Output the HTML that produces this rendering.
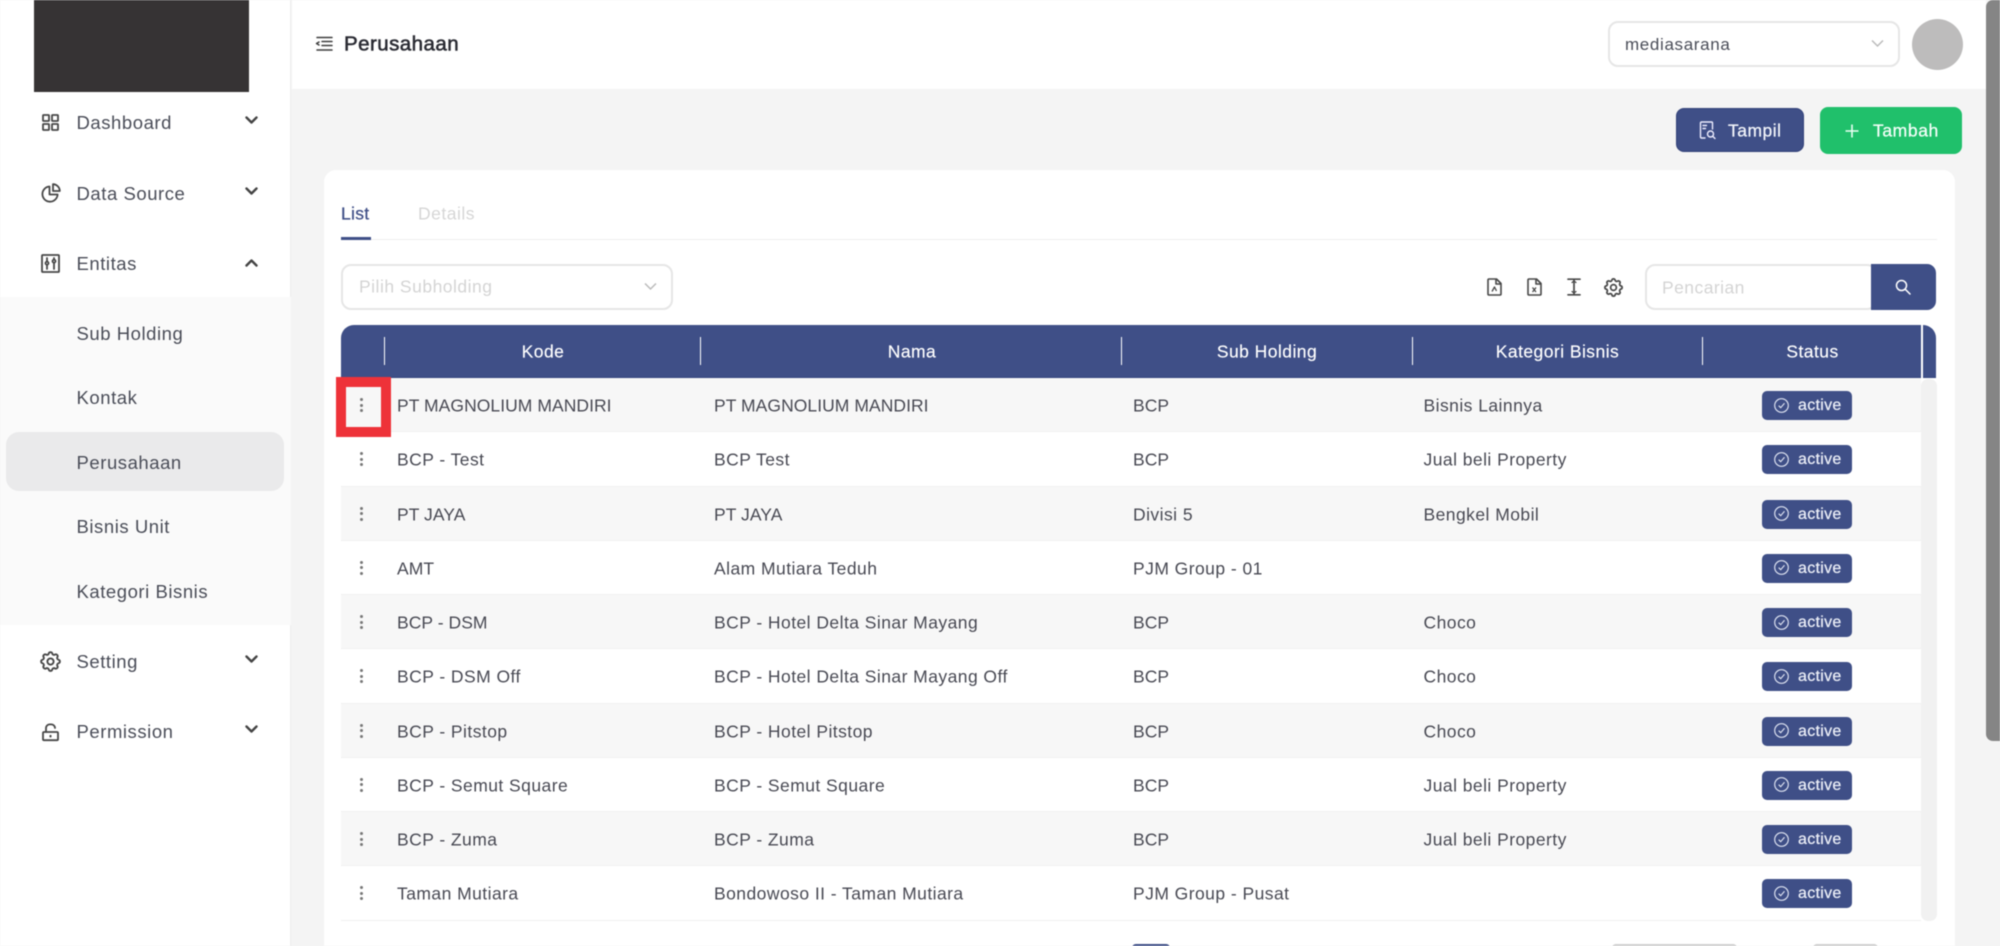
<!DOCTYPE html>
<html lang="id">
<head>
<meta charset="utf-8">
<title>Perusahaan</title>
<style>
*{box-sizing:border-box;margin:0;padding:0}
html,body{width:2000px;height:946px;overflow:hidden;background:#f4f4f4}
body{font-family:"Liberation Sans",sans-serif;color:#474852}
#w{position:absolute;left:0;top:0;width:2000px;height:946px;overflow:hidden;background:#f4f4f4;filter:blur(.45px)}
.a{position:absolute}
.t{position:absolute;white-space:nowrap;transform:translateY(-50%);line-height:1.2}
svg{position:absolute;overflow:visible}
#side{left:0;top:0;width:291px;height:946px;background:#fff;border-right:1px solid #eee}
.m{font-size:18.5px;letter-spacing:.55px;left:76.5px;color:#4a4d58}
.ic{fill:none;stroke:#474747;stroke-width:1.8;stroke-linecap:round;stroke-linejoin:round}
.ch{fill:none;stroke:#444;stroke-width:2.4;stroke-linecap:round;stroke-linejoin:round}
.box{background:#fff;border:2px solid #e6e6e6;border-radius:10px}
.row{position:absolute;left:341px;width:1580px;height:54.25px;border-bottom:1.5px solid #f0f0f0;background:#fff}
.row.o{background:#f7f7f7}
.row span{position:absolute;top:28px;transform:translateY(-50%);white-space:nowrap;font-size:17.5px;letter-spacing:.45px;line-height:1.2;color:#484953}
.row span.u{letter-spacing:.05px}
.row span.c1{left:56px}.row span.c2{left:373px}.row span.c3{left:792px}.row span.c4{left:1082.5px}
.row i{position:absolute;left:19.2px;width:3px;height:3px;border-radius:50%;background:#777}
.row i.d1{top:20px}.row i.d2{top:25.5px}.row i.d3{top:31px}
.row b{position:absolute;left:1421px;top:13px;width:90px;height:29px;background:#3f4f87;border-radius:5px;color:#eef1f9;font-weight:normal;font-size:16px;letter-spacing:.3px;line-height:30px;padding-left:36px;-webkit-text-stroke:.2px #eef1f9}
.row b svg{left:11.5px;top:6.5px}
.th{position:absolute;top:352px;transform:translate(-50%,-50%);color:#fff;font-size:17.5px;letter-spacing:.45px;white-space:nowrap;-webkit-text-stroke:.15px #fff}
.dv{position:absolute;top:337px;width:2px;height:28px;background:#fff}
</style>
</head>
<body>
<div id="w">

<!-- Sidebar -->
<div id="side" class="a"></div>
<div class="a" style="left:33.5px;top:0;width:215.5px;height:91.5px;background:#363334"></div>
<div class="a" style="left:0;top:297px;width:291px;height:328px;background:#fafafa"></div>
<div class="a" style="left:6px;top:432px;width:278px;height:59px;background:#eaeaeb;border-radius:13px"></div>

<svg style="left:42px;top:114px" width="17" height="17" viewBox="0 0 17 17" class="ic"><rect x="1" y="1" width="6" height="6" rx=".6"/><rect x="10" y="1" width="6" height="6" rx=".6"/><rect x="1" y="10" width="6" height="6" rx=".6"/><rect x="10" y="10" width="6" height="6" rx=".6"/></svg>
<div class="t m" style="top:123px">Dashboard</div>
<svg style="left:245px;top:115.5px" width="13" height="9" viewBox="0 0 13 9" class="ch"><path d="M1.5 1.5 6.5 6.5 11.5 1.5"/></svg>

<svg style="left:41px;top:183px" width="20" height="20" viewBox="0 0 20 20" class="ic"><path d="M8.5 3.5A7.6 7.6 0 1 0 16.6 11.5H8.5Z"/><path d="M12 1.2a7 7 0 0 1 6.8 6.8H12Z"/></svg>
<div class="t m" style="top:193.5px">Data Source</div>
<svg style="left:245px;top:186.5px" width="13" height="9" viewBox="0 0 13 9" class="ch"><path d="M1.5 1.5 6.5 6.5 11.5 1.5"/></svg>

<svg style="left:41px;top:254px" width="19" height="19" viewBox="0 0 19 19" class="ic"><rect x="1" y="1" width="17" height="17" rx=".8"/><path d="M6 4v3.5M6 11v4M13 4v1.5M13 9v6"/><circle cx="6" cy="9.2" r="1.5"/><circle cx="13" cy="7.2" r="1.5"/></svg>
<div class="t m" style="top:264px">Entitas</div>
<svg style="left:245px;top:258px" width="13" height="9" viewBox="0 0 13 9" class="ch"><path d="M1.5 7.5 6.5 2.5 11.5 7.5"/></svg>

<div class="t m" style="top:334px">Sub Holding</div>
<div class="t m" style="top:398px">Kontak</div>
<div class="t m" style="top:463px">Perusahaan</div>
<div class="t m" style="top:527px">Bisnis Unit</div>
<div class="t m" style="top:592px">Kategori Bisnis</div>

<svg style="left:38px;top:649px" width="25" height="25" viewBox="0 0 24 24" class="ic" stroke-width="1.8"><path d="M10.325 4.317c.426-1.756 2.924-1.756 3.35 0a1.724 1.724 0 0 0 2.573 1.066c1.543-.94 3.31.826 2.37 2.37a1.724 1.724 0 0 0 1.065 2.572c1.756.426 1.756 2.924 0 3.35a1.724 1.724 0 0 0-1.066 2.573c.94 1.543-.826 3.31-2.37 2.37a1.724 1.724 0 0 0-2.572 1.065c-.426 1.756-2.924 1.756-3.35 0a1.724 1.724 0 0 0-2.573-1.066c-1.543.94-3.31-.826-2.37-2.37a1.724 1.724 0 0 0-1.065-2.572c-1.756-.426-1.756-2.924 0-3.35a1.724 1.724 0 0 0 1.066-2.573c-.94-1.543.826-3.31 2.37-2.37.996.608 2.296.07 2.572-1.065z"/><circle cx="12" cy="12" r="3"/></svg>
<div class="t m" style="top:662px">Setting</div>
<svg style="left:245px;top:654.5px" width="13" height="9" viewBox="0 0 13 9" class="ch"><path d="M1.5 1.5 6.5 6.5 11.5 1.5"/></svg>

<svg style="left:42px;top:723px" width="17" height="18" viewBox="0 0 17 18" class="ic"><rect x="1" y="9" width="15" height="8.2" rx="1"/><path d="M4 9V5A3.6 3.6 0 0 1 7.6 1.4h1.8A3.6 3.6 0 0 1 13 5"/><path d="M8.5 13v.4" stroke-width="2.2"/></svg>
<div class="t m" style="top:732px">Permission</div>
<svg style="left:245px;top:724.5px" width="13" height="9" viewBox="0 0 13 9" class="ch"><path d="M1.5 1.5 6.5 6.5 11.5 1.5"/></svg>

<!-- Header -->
<div class="a" style="left:292px;top:0;width:1694px;height:89px;background:#fff"></div>
<svg style="left:315px;top:36px" width="18" height="16" viewBox="0 0 18 16" fill="none" stroke="#3c3c3c" stroke-width="1.5" stroke-linecap="round"><path d="M2 1.5h15M7 5.5h10M7 9.5h10M2 14h15"/><path d="M4 6 1.5 7.5 4 9" stroke-linejoin="round"/></svg>
<div class="t" style="left:344px;top:45px;font-size:20.5px;color:#2a2b33;letter-spacing:.45px;-webkit-text-stroke:.55px #2a2b33">Perusahaan</div>

<div class="a box" style="left:1608px;top:21px;width:292px;height:46px"></div>
<div class="t" style="left:1625px;top:44.5px;font-size:17px;letter-spacing:.65px;color:#4a4d58">mediasarana</div>
<svg style="left:1871px;top:39px" width="13" height="9" viewBox="0 0 13 9" fill="none" stroke="#bbb" stroke-width="1.5"><path d="M1 1.5 6.5 7 12 1.5"/></svg>
<div class="a" style="left:1912px;top:19px;width:51px;height:51px;border-radius:50%;background:#bdbcbc"></div>

<!-- Buttons -->
<div class="a" style="left:1676px;top:108px;width:128px;height:44px;background:#3f4f87;border:1.5px solid #33427a;border-radius:8px"></div>
<svg style="left:1699px;top:121px" width="17" height="19" viewBox="0 0 17 19" fill="none" stroke="#eef" stroke-width="1.4" stroke-linecap="round"><path d="M6 17H2.5a1 1 0 0 1-1-1V2a1 1 0 0 1 1-1h10a1 1 0 0 1 1 1v6"/><path d="M4 4.5h3.5M4 7.5h2.5"/><circle cx="11.5" cy="13" r="3"/><path d="M13.7 15.2 16 17.5"/></svg>
<div class="t" style="left:1728px;top:131px;font-size:17.5px;letter-spacing:.5px;color:#f2f4fa;-webkit-text-stroke:.25px #f2f4fa">Tampil</div>

<div class="a" style="left:1820px;top:107px;width:142px;height:47px;background:#20c06b;border-radius:8px"></div>
<svg style="left:1845px;top:124px" width="14" height="14" viewBox="0 0 14 14" fill="none" stroke="#eafff3" stroke-width="1.6"><path d="M7 .5v13M.5 7h13"/></svg>
<div class="t" style="left:1873px;top:131px;font-size:17.5px;letter-spacing:.6px;color:#f4fff9;-webkit-text-stroke:.25px #f4fff9">Tambah</div>

<!-- Card -->
<div class="a" style="left:324px;top:170px;width:1631px;height:790px;background:#fff;border-radius:12px"></div>

<div class="t" style="left:341px;top:214px;font-size:17.5px;letter-spacing:.3px;color:#3f4f87;-webkit-text-stroke:.25px #3f4f87">List</div>
<div class="t" style="left:418px;top:214px;font-size:17.5px;letter-spacing:.5px;color:#d6d6d6">Details</div>
<div class="a" style="left:341px;top:238.5px;width:1596px;height:1.5px;background:#eeeeee"></div>
<div class="a" style="left:341px;top:237px;width:30px;height:3px;background:#3f4f87"></div>

<div class="a box" style="left:341px;top:264px;width:332px;height:46px"></div>
<div class="t" style="left:359px;top:287px;font-size:17.5px;letter-spacing:.5px;color:#d4d4d4">Pilih Subholding</div>
<svg style="left:644px;top:282px" width="13" height="9" viewBox="0 0 13 9" fill="none" stroke="#bbb" stroke-width="1.5"><path d="M1 1.5 6.5 7 12 1.5"/></svg>

<!-- toolbar icons -->
<svg style="left:1487px;top:278px" width="15" height="18" viewBox="0 0 15 18" fill="none" stroke="#474747" stroke-width="1.6" stroke-linejoin="round"><path d="M1 2a1 1 0 0 1 1-1h7.5L14 5.5V16a1 1 0 0 1-1 1H2a1 1 0 0 1-1-1Z"/><path d="M9 1v5h5"/><path d="M5 13.5 7.5 9 9.5 13" stroke-width="1.3"/></svg>
<svg style="left:1527px;top:278px" width="15" height="18" viewBox="0 0 15 18" fill="none" stroke="#474747" stroke-width="1.6" stroke-linejoin="round"><path d="M1 2a1 1 0 0 1 1-1h7.5L14 5.5V16a1 1 0 0 1-1 1H2a1 1 0 0 1-1-1Z"/><path d="M9 1v5h5"/><path d="M5.5 9.5 9 14M9 9.5 5.5 14" stroke-width="1.3"/></svg>
<svg style="left:1567px;top:278px" width="14" height="18" viewBox="0 0 14 18" fill="none" stroke="#474747" stroke-width="1.7" stroke-linecap="round"><path d="M1 1.2h12M1 16.8h12M7 1.5v15"/><path d="M5 4.5 7 3l2 1.5M5 13.5 7 15l2-1.5" stroke-width="1.2"/></svg>
<svg style="left:1601.5px;top:275.5px" width="23" height="23" viewBox="0 0 24 24" class="ic" stroke-width="1.9"><path d="M10.325 4.317c.426-1.756 2.924-1.756 3.35 0a1.724 1.724 0 0 0 2.573 1.066c1.543-.94 3.31.826 2.37 2.37a1.724 1.724 0 0 0 1.065 2.572c1.756.426 1.756 2.924 0 3.35a1.724 1.724 0 0 0-1.066 2.573c.94 1.543-.826 3.31-2.37 2.37a1.724 1.724 0 0 0-2.572 1.065c-.426 1.756-2.924 1.756-3.35 0a1.724 1.724 0 0 0-2.573-1.066c-1.543.94-3.31-.826-2.37-2.37a1.724 1.724 0 0 0-1.065-2.572c-1.756-.426-1.756-2.924 0-3.35a1.724 1.724 0 0 0 1.066-2.573c-.94-1.543.826-3.31 2.37-2.37.996.608 2.296.07 2.572-1.065z"/><circle cx="12" cy="12" r="3"/></svg>

<!-- search -->
<div class="a box" style="left:1645px;top:264px;width:232px;height:46px"></div>
<div class="a" style="left:1871px;top:264px;width:65px;height:46px;background:#3f4f87;border-radius:0 9px 9px 0"></div>
<div class="t" style="left:1662px;top:287.5px;font-size:17.5px;letter-spacing:.45px;color:#d4d4d4">Pencarian</div>
<svg style="left:1895px;top:279px" width="16" height="16" viewBox="0 0 16 16" fill="none" stroke="#fff" stroke-width="1.5" stroke-linecap="round"><circle cx="6.5" cy="6.5" r="5"/><path d="M10.3 10.3 15 15"/></svg>

<!-- table head -->
<div class="a" style="left:341px;top:325px;width:1595px;height:53px;background:#3f4f87;border-radius:13px 13px 0 0;border-bottom:1.5px solid #34457f"></div>
<div class="dv" style="left:383.5px;width:1.5px"></div>
<div class="dv" style="left:699.5px;width:1.5px"></div>
<div class="dv" style="left:1120.5px;width:1.5px"></div>
<div class="dv" style="left:1411.5px;width:1.5px"></div>
<div class="dv" style="left:1701.5px;width:1.5px"></div>
<div class="a" style="left:1921px;top:325px;width:1.5px;height:53px;background:#fff"></div>
<div class="th" style="left:543px">Kode</div>
<div class="th" style="left:912px">Nama</div>
<div class="th" style="left:1267px">Sub Holding</div>
<div class="th" style="left:1557.5px">Kategori Bisnis</div>
<div class="th" style="left:1812.5px">Status</div>

<!-- table vertical track -->
<div class="a" style="left:1921px;top:379px;width:16px;height:542px;background:#f1f1f1;border-radius:7px"></div>

<!-- rows -->
<div class="row o" style="top:378px"><i class="d1"></i><i class="d2"></i><i class="d3"></i><span class="c1 u">PT MAGNOLIUM MANDIRI</span><span class="c2 u">PT MAGNOLIUM MANDIRI</span><span class="c3 u">BCP</span><span class="c4">Bisnis Lainnya</span><b><svg width="15" height="15" viewBox="0 0 15 15" fill="none" stroke="#dfe4f2" stroke-width="1.15"><circle cx="7.5" cy="7.5" r="6.8"/><path d="M4.7 7.7 6.7 9.7 10.5 5.3"/></svg>active</b></div>
<div class="row" style="top:432.25px"><i class="d1"></i><i class="d2"></i><i class="d3"></i><span class="c1">BCP - Test</span><span class="c2">BCP Test</span><span class="c3 u">BCP</span><span class="c4">Jual beli Property</span><b><svg width="15" height="15" viewBox="0 0 15 15" fill="none" stroke="#dfe4f2" stroke-width="1.15"><circle cx="7.5" cy="7.5" r="6.8"/><path d="M4.7 7.7 6.7 9.7 10.5 5.3"/></svg>active</b></div>
<div class="row o" style="top:486.5px"><i class="d1"></i><i class="d2"></i><i class="d3"></i><span class="c1 u">PT JAYA</span><span class="c2 u">PT JAYA</span><span class="c3">Divisi 5</span><span class="c4">Bengkel Mobil</span><b><svg width="15" height="15" viewBox="0 0 15 15" fill="none" stroke="#dfe4f2" stroke-width="1.15"><circle cx="7.5" cy="7.5" r="6.8"/><path d="M4.7 7.7 6.7 9.7 10.5 5.3"/></svg>active</b></div>
<div class="row" style="top:540.75px"><i class="d1"></i><i class="d2"></i><i class="d3"></i><span class="c1 u">AMT</span><span class="c2">Alam Mutiara Teduh</span><span class="c3">PJM Group - 01</span><b><svg width="15" height="15" viewBox="0 0 15 15" fill="none" stroke="#dfe4f2" stroke-width="1.15"><circle cx="7.5" cy="7.5" r="6.8"/><path d="M4.7 7.7 6.7 9.7 10.5 5.3"/></svg>active</b></div>
<div class="row o" style="top:595px"><i class="d1"></i><i class="d2"></i><i class="d3"></i><span class="c1 u">BCP - DSM</span><span class="c2">BCP - Hotel Delta Sinar Mayang</span><span class="c3 u">BCP</span><span class="c4">Choco</span><b><svg width="15" height="15" viewBox="0 0 15 15" fill="none" stroke="#dfe4f2" stroke-width="1.15"><circle cx="7.5" cy="7.5" r="6.8"/><path d="M4.7 7.7 6.7 9.7 10.5 5.3"/></svg>active</b></div>
<div class="row" style="top:649.25px"><i class="d1"></i><i class="d2"></i><i class="d3"></i><span class="c1">BCP - DSM Off</span><span class="c2">BCP - Hotel Delta Sinar Mayang Off</span><span class="c3 u">BCP</span><span class="c4">Choco</span><b><svg width="15" height="15" viewBox="0 0 15 15" fill="none" stroke="#dfe4f2" stroke-width="1.15"><circle cx="7.5" cy="7.5" r="6.8"/><path d="M4.7 7.7 6.7 9.7 10.5 5.3"/></svg>active</b></div>
<div class="row o" style="top:703.5px"><i class="d1"></i><i class="d2"></i><i class="d3"></i><span class="c1">BCP - Pitstop</span><span class="c2">BCP - Hotel Pitstop</span><span class="c3 u">BCP</span><span class="c4">Choco</span><b><svg width="15" height="15" viewBox="0 0 15 15" fill="none" stroke="#dfe4f2" stroke-width="1.15"><circle cx="7.5" cy="7.5" r="6.8"/><path d="M4.7 7.7 6.7 9.7 10.5 5.3"/></svg>active</b></div>
<div class="row" style="top:757.75px"><i class="d1"></i><i class="d2"></i><i class="d3"></i><span class="c1">BCP - Semut Square</span><span class="c2">BCP - Semut Square</span><span class="c3 u">BCP</span><span class="c4">Jual beli Property</span><b><svg width="15" height="15" viewBox="0 0 15 15" fill="none" stroke="#dfe4f2" stroke-width="1.15"><circle cx="7.5" cy="7.5" r="6.8"/><path d="M4.7 7.7 6.7 9.7 10.5 5.3"/></svg>active</b></div>
<div class="row o" style="top:812px"><i class="d1"></i><i class="d2"></i><i class="d3"></i><span class="c1">BCP - Zuma</span><span class="c2">BCP - Zuma</span><span class="c3 u">BCP</span><span class="c4">Jual beli Property</span><b><svg width="15" height="15" viewBox="0 0 15 15" fill="none" stroke="#dfe4f2" stroke-width="1.15"><circle cx="7.5" cy="7.5" r="6.8"/><path d="M4.7 7.7 6.7 9.7 10.5 5.3"/></svg>active</b></div>
<div class="row" style="top:866.25px"><i class="d1"></i><i class="d2"></i><i class="d3"></i><span class="c1">Taman Mutiara</span><span class="c2">Bondowoso II - Taman Mutiara</span><span class="c3">PJM Group - Pusat</span><b><svg width="15" height="15" viewBox="0 0 15 15" fill="none" stroke="#dfe4f2" stroke-width="1.15"><circle cx="7.5" cy="7.5" r="6.8"/><path d="M4.7 7.7 6.7 9.7 10.5 5.3"/></svg>active</b></div>

<!-- pagination tops -->
<div class="a" style="left:1132px;top:944px;width:38px;height:6px;background:#3f4f87;border-radius:4px 4px 0 0"></div>
<div class="a" style="left:1612px;top:944px;width:125px;height:6px;background:#d0d0d0;border-radius:4px 4px 0 0"></div>
<div class="a" style="left:1813px;top:944px;width:65px;height:6px;background:#d0d0d0;border-radius:4px 4px 0 0"></div>

<!-- red highlight -->
<div class="a" style="left:336px;top:377px;width:55px;height:60px;border:10px solid #ee3239"></div>

<!-- page scrollbar -->
<div class="a" style="left:1986px;top:0;width:14px;height:741px;background:#858585;border-radius:7px 0 0 7px"></div>

</div>
</body>
</html>
